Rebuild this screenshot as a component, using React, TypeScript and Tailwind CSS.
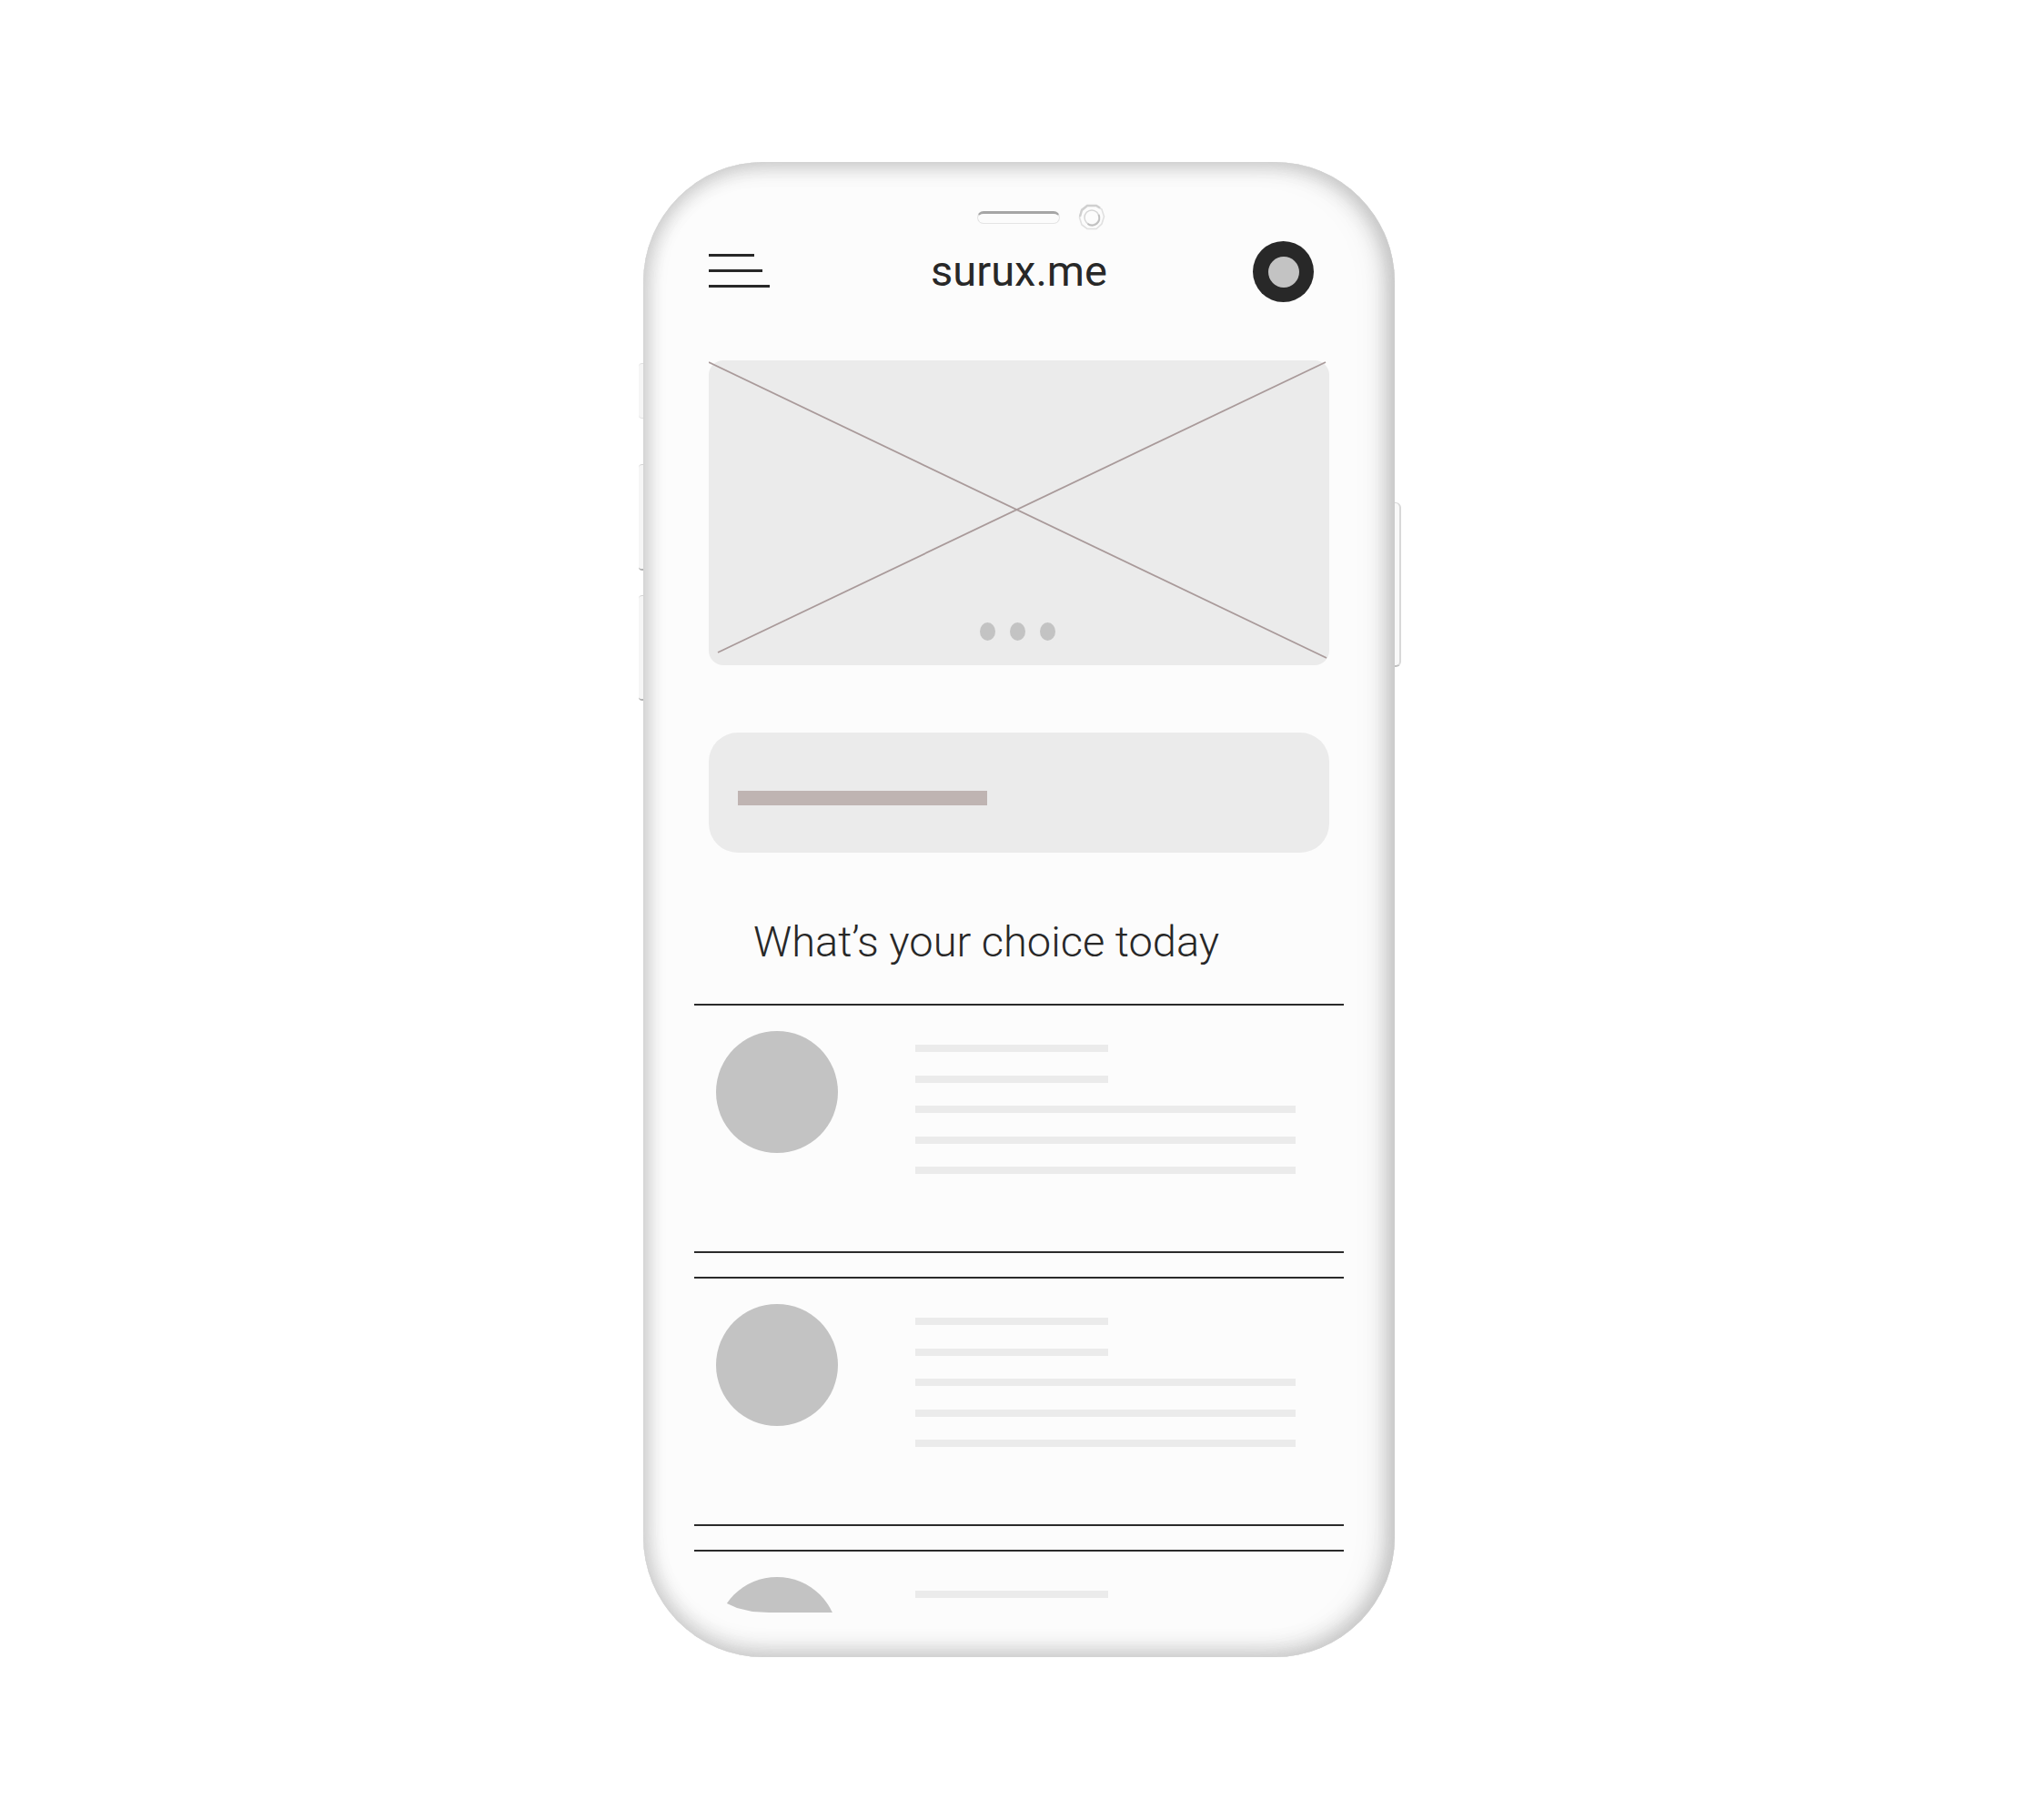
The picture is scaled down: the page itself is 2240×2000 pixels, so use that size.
const bars = ["w-[212px]", "w-[212px]", "w-full", "w-full", "w-full"];

function Row() {
  return (
    <li className="flex h-[274px] shrink-0 items-start border-y-2 border-[#2b2b2b] pt-7 pr-[53px] pl-6">
      <div className="size-[134px] shrink-0 rounded-full bg-[#c3c3c3]" />
      <div className="ml-[85px] flex h-[157px] flex-1 flex-col justify-between pt-[15px]">
        {bars.map((w, i) => (
          <div key={i} className={`h-[8px] bg-[#ebebeb] ${w}`} />
        ))}
      </div>
    </li>
  );
}

function Camera() {
  return (
    <svg viewBox="0 0 30 30" className="size-[30px]" fill="none" aria-hidden="true">
      <polygon points="10,2 20,2 26,6 28.5,14 26,22 20,27.5 10,27.5 4,23 1.5,15 4,6" stroke="#e0e0e0" strokeWidth="1.6" />
      <path d="M2 14 4 7 10 2H20L24 4.5" stroke="#d0d0d0" strokeWidth="2.4" />
      <circle cx="15" cy="15" r="8" stroke="#d6d6d6" strokeWidth="1.5" />
      <path d="M22.5 12a8 8 0 0 1-12 10" stroke="#c0c0c0" strokeWidth="2" />
    </svg>
  );
}

export default function App() {
  return (
    <div className="flex min-h-screen justify-center bg-white pt-[178px] pb-[178px] font-['Roboto',sans-serif] text-[#282828]">
      <div className="relative w-full max-w-[826px] self-start">
        <div className="absolute top-[221px] -left-[5px] h-[61px] w-[7px] rounded-l-sm border-y border-y-[#e0e0e0] bg-[#f6f6f6]" />
        <div className="absolute top-[332px] -left-[5px] h-[117px] w-[7px] rounded-l-sm border-t border-b-2 border-t-[#d5d5d5] border-b-[#b4b4b4] bg-[#f6f6f6]" />
        <div className="absolute top-[476px] -left-[5px] h-[116px] w-[7px] rounded-l-sm border-t border-b-2 border-t-[#d5d5d5] border-b-[#b4b4b4] bg-[#f6f6f6]" />
        <div className="absolute top-[374px] -right-[7px] h-[181px] w-2 rounded-r-md border border-r-2 border-b-2 border-[#d8d8d8] border-b-[#c0c0c0] bg-[#f9f9f9]" />
        <div className="relative flex h-[1643px] flex-col rounded-[132px] bg-[#fcfcfc] px-[56px] pt-[44px] pb-[49px] shadow-[inset_0_0_2px_#d4d4d4,inset_8px_0_24px_-7px_#cccccc,inset_-12px_0_26px_-9px_#bcbcbc,inset_-14px_0_44px_-12px_#dedede,inset_0_9px_26px_-8px_#cccccc,inset_0_-10px_30px_-9px_#c2c2c2]">
          <div className="flex h-[34px] items-center justify-center">
            <div className="ml-12 h-[14px] w-[91px] rounded-full border border-t-3 border-[#e4e4e4] border-t-[#a6a6a6]" />
            <div className="ml-5">
              <Camera />
            </div>
          </div>
          <header className="mt-[9px] grid grid-cols-[1fr_auto_1fr] items-center px-4">
            <button aria-label="Menu" className="flex w-[67px] flex-col gap-[14px] pb-0.5">
              <span className="h-[3px] w-[50px] bg-[#282828]" />
              <span className="h-[3px] w-[59px] bg-[#282828]" />
              <span className="h-[3px] w-[67px] bg-[#282828]" />
            </button>
            <h1 className="pb-0.5 text-[47px] leading-[56px]">surux.me</h1>
            <button aria-label="Profile" className="mr-[17px] flex size-[67px] items-center justify-center justify-self-end rounded-full bg-[#282828]">
              <span className="size-[34px] rounded-full bg-[#c3c3c3]" />
            </button>
          </header>
          <div className="relative mx-4 mt-16 h-[335px] shrink-0">
            <div className="h-full rounded-2xl bg-[#ebebeb]" />
            <svg viewBox="0 0 682 335" preserveAspectRatio="none" className="absolute inset-0 size-full" aria-hidden="true">
              <path d="M0 2 679 327M678 2 10 321" stroke="#a99a9a" strokeWidth="1.8" fill="none" />
            </svg>
            <div className="absolute inset-x-0 bottom-[27px] flex justify-center gap-4 pr-1">
              <span className="h-5 w-[17px] rounded-[50%] bg-[#c3c3c3]" />
              <span className="h-5 w-[17px] rounded-[50%] bg-[#c3c3c3]" />
              <span className="h-5 w-[17px] rounded-[50%] bg-[#c3c3c3]" />
            </div>
          </div>
          <div className="mx-4 mt-[74px] flex h-[132px] shrink-0 items-center rounded-[32px] bg-[#ebebeb] px-8">
            <div className="mt-3 h-4 w-[274px] bg-[#bfb4b2]" />
          </div>
          <h2 className="mt-[70px] pl-[65px] text-[47px] leading-[56px] font-light">What’s your choice today</h2>
          <ul className="mt-10 flex min-h-0 flex-1 flex-col gap-[26px] overflow-hidden [clip-path:polygon(0_0,100%_0,100%_100%,82px_100%,64px_calc(100%-1px),47px_calc(100%-5px),36px_calc(100%-10px),0_calc(100%-36px))]">
            <Row />
            <Row />
            <Row />
          </ul>
        </div>
      </div>
    </div>
  );
}
